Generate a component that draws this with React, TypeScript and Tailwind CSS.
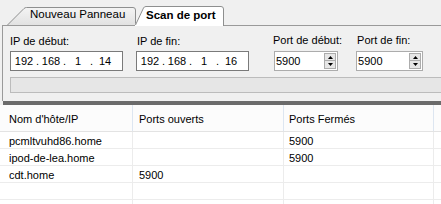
import React from "react";

const rows: string[][] = [
  ["pcmltvuhd86.home", "", "5900"],
  ["ipod-de-lea.home", "", "5900"],
  ["cdt.home", "5900", ""],
  ["", "", ""],
  ["", "", ""],
];

function IpBox({ parts }: { parts: string[] }) {
  return (
    <div className="flex items-center h-[20px] w-[113px] border border-[#7a7a7a] bg-white pl-[3px] leading-[13px]">
      {parts.map((p, i) => (
        <React.Fragment key={i}>
          <span className="w-[20px] text-center">{p}</span>
          {i < 3 && <span className="w-[7px] text-center">.</span>}
        </React.Fragment>
      ))}
    </div>
  );
}

function Arrow({ up }: { up?: boolean }) {
  return (
    <svg width="5" height="3" viewBox="0 0 5 3">
      <path d={up ? "M2.5 0 L5 3 L0 3 Z" : "M0 0 L5 0 L2.5 3 Z"} fill="#000" />
    </svg>
  );
}

function SpinBox({ value, width }: { value: string; width: string }) {
  return (
    <div className={`flex h-[20px] ${width} border border-[#acacac] bg-white`}>
      <span className="flex-1 pl-[1px] leading-[18px]">{value}</span>
      <div className="flex flex-col w-[12px] my-[1px] mr-[1px]">
        <div className="flex items-center justify-center h-[8px] border border-[#acacac] bg-[#e6e6e6]">
          <Arrow up />
        </div>
        <div className="flex items-center justify-center h-[8px] border border-t-0 border-[#acacac] bg-[#e6e6e6]">
          <Arrow />
        </div>
      </div>
    </div>
  );
}

export default function App() {
  return (
    <div className="w-[441px] h-[204px] overflow-hidden bg-[#f0f0f0] font-['Liberation_Sans',Arial,sans-serif] text-[11px] text-black">
      {/* Tabs */}
      <div className="flex items-end h-[25px] pl-[7px]">
        <div className="relative h-[18px] w-[129px]">
          <svg className="absolute inset-0" width="129" height="18" viewBox="0 0 129 18">
            <defs>
              <linearGradient id="t1" x1="0" y1="0" x2="0" y2="1">
                <stop offset="0" stopColor="#f4f4f4" />
                <stop offset="1" stopColor="#e2e2e2" />
              </linearGradient>
            </defs>
            <path d="M0 18 L17 1.5 Q18 0.5 19.5 0.5 L126 0.5 Q128.5 0.5 128.5 3 L128.5 18 Z" fill="url(#t1)" />
            <path d="M0.5 18 L17 1.5 Q18 0.5 19.5 0.5 L126 0.5 Q128.5 0.5 128.5 3 L128.5 18" fill="none" stroke="#8e8f8f" />
          </svg>
          <span className="relative block pl-[23px] text-[11.5px] leading-[14px] whitespace-nowrap">Nouveau Panneau</span>
        </div>
        <div className="relative z-10 h-[20px] w-[89px] -ml-[1px] -mb-[1px]">
          <svg className="absolute inset-0" width="89" height="20" viewBox="0 0 89 20">
            <path d="M0 20 L0 19 L8.5 2 Q9.2 0.5 11 0.5 L86 0.5 Q88.5 0.5 88.5 3 L88.5 20 Z" fill="#fff" />
            <path d="M0.5 19 L8.5 2 Q9.2 0.5 11 0.5 L86 0.5 Q88.5 0.5 88.5 3 L88.5 20" fill="none" stroke="#8e8f8f" />
          </svg>
          <span className="relative block pl-[11px] pt-[2px] text-[11.5px] font-bold leading-[14px] whitespace-nowrap">Scan de port</span>
        </div>
      </div>

      {/* Panel */}
      <div className="ml-[2px] h-[76px] border-l border-t border-[#9a9a9a] pt-[9px] pl-[7px]">
        <div className="flex leading-[13px]">
          <div className="flex flex-col">
            <span>IP de début:</span>
            <div className="mt-[3px]">
              <IpBox parts={["192", "168", "1", "14"]} />
            </div>
          </div>
          <div className="flex flex-col ml-[13px]">
            <span className="pl-[1px]">IP de fin:</span>
            <div className="mt-[3px]">
              <IpBox parts={["192", "168", "1", "16"]} />
            </div>
          </div>
          <div className="flex flex-col ml-[24px]">
            <span className="-mt-[1px] mb-[1px]">Port de début:</span>
            <div className="mt-[3px] ml-[1px]">
              <SpinBox value="5900" width="w-[64px]" />
            </div>
          </div>
          <div className="flex flex-col ml-[14px]">
            <span className="pl-[1px] -mt-[1px] mb-[1px]">Port de fin:</span>
            <div className="mt-[3px]">
              <SpinBox value="5900" width="w-[67px]" />
            </div>
          </div>
        </div>
        <div className="mt-[6px] -mr-[12px] h-[16px] border border-[#bcbcbc] bg-[#e6e6e6]" />
      </div>

      {/* Splitter */}
      <div className="ml-[3px] h-[4px] bg-[#6b6b6b]" />

      {/* Grid */}
      <div className="bg-white h-[99px]">
        <div className="flex h-[27px] border-b border-[#e3e3e3] bg-[#fcfcfc] leading-[13px]">
          <div className="w-[132px] pl-[9px] pt-[8px]">Nom d'hôte/IP</div>
          <div className="w-[151px] border-l border-[#dde6f1] pl-[6px] pt-[8px]">Ports ouverts</div>
          <div className="w-[150px] border-l border-[#dde6f1] pl-[5px] pt-[8px]">Ports Fermés</div>
          <div className="flex-1 border-l border-[#dde6f1]" />
        </div>
        {rows.map((r, i) => (
          <div key={i} className="flex h-[17px] border-b border-[#ececec] leading-[13px]">
            <div className="w-[132px] pl-[9px] pt-[3px] whitespace-nowrap">{r[0]}</div>
            <div className="w-[151px] border-l border-[#ececec] pl-[6px] pt-[3px]">{r[1]}</div>
            <div className="w-[150px] border-l border-[#ececec] pl-[5px] pt-[3px]">{r[2]}</div>
            <div className="flex-1 border-l border-[#ececec]" />
          </div>
        ))}
      </div>
    </div>
  );
}
